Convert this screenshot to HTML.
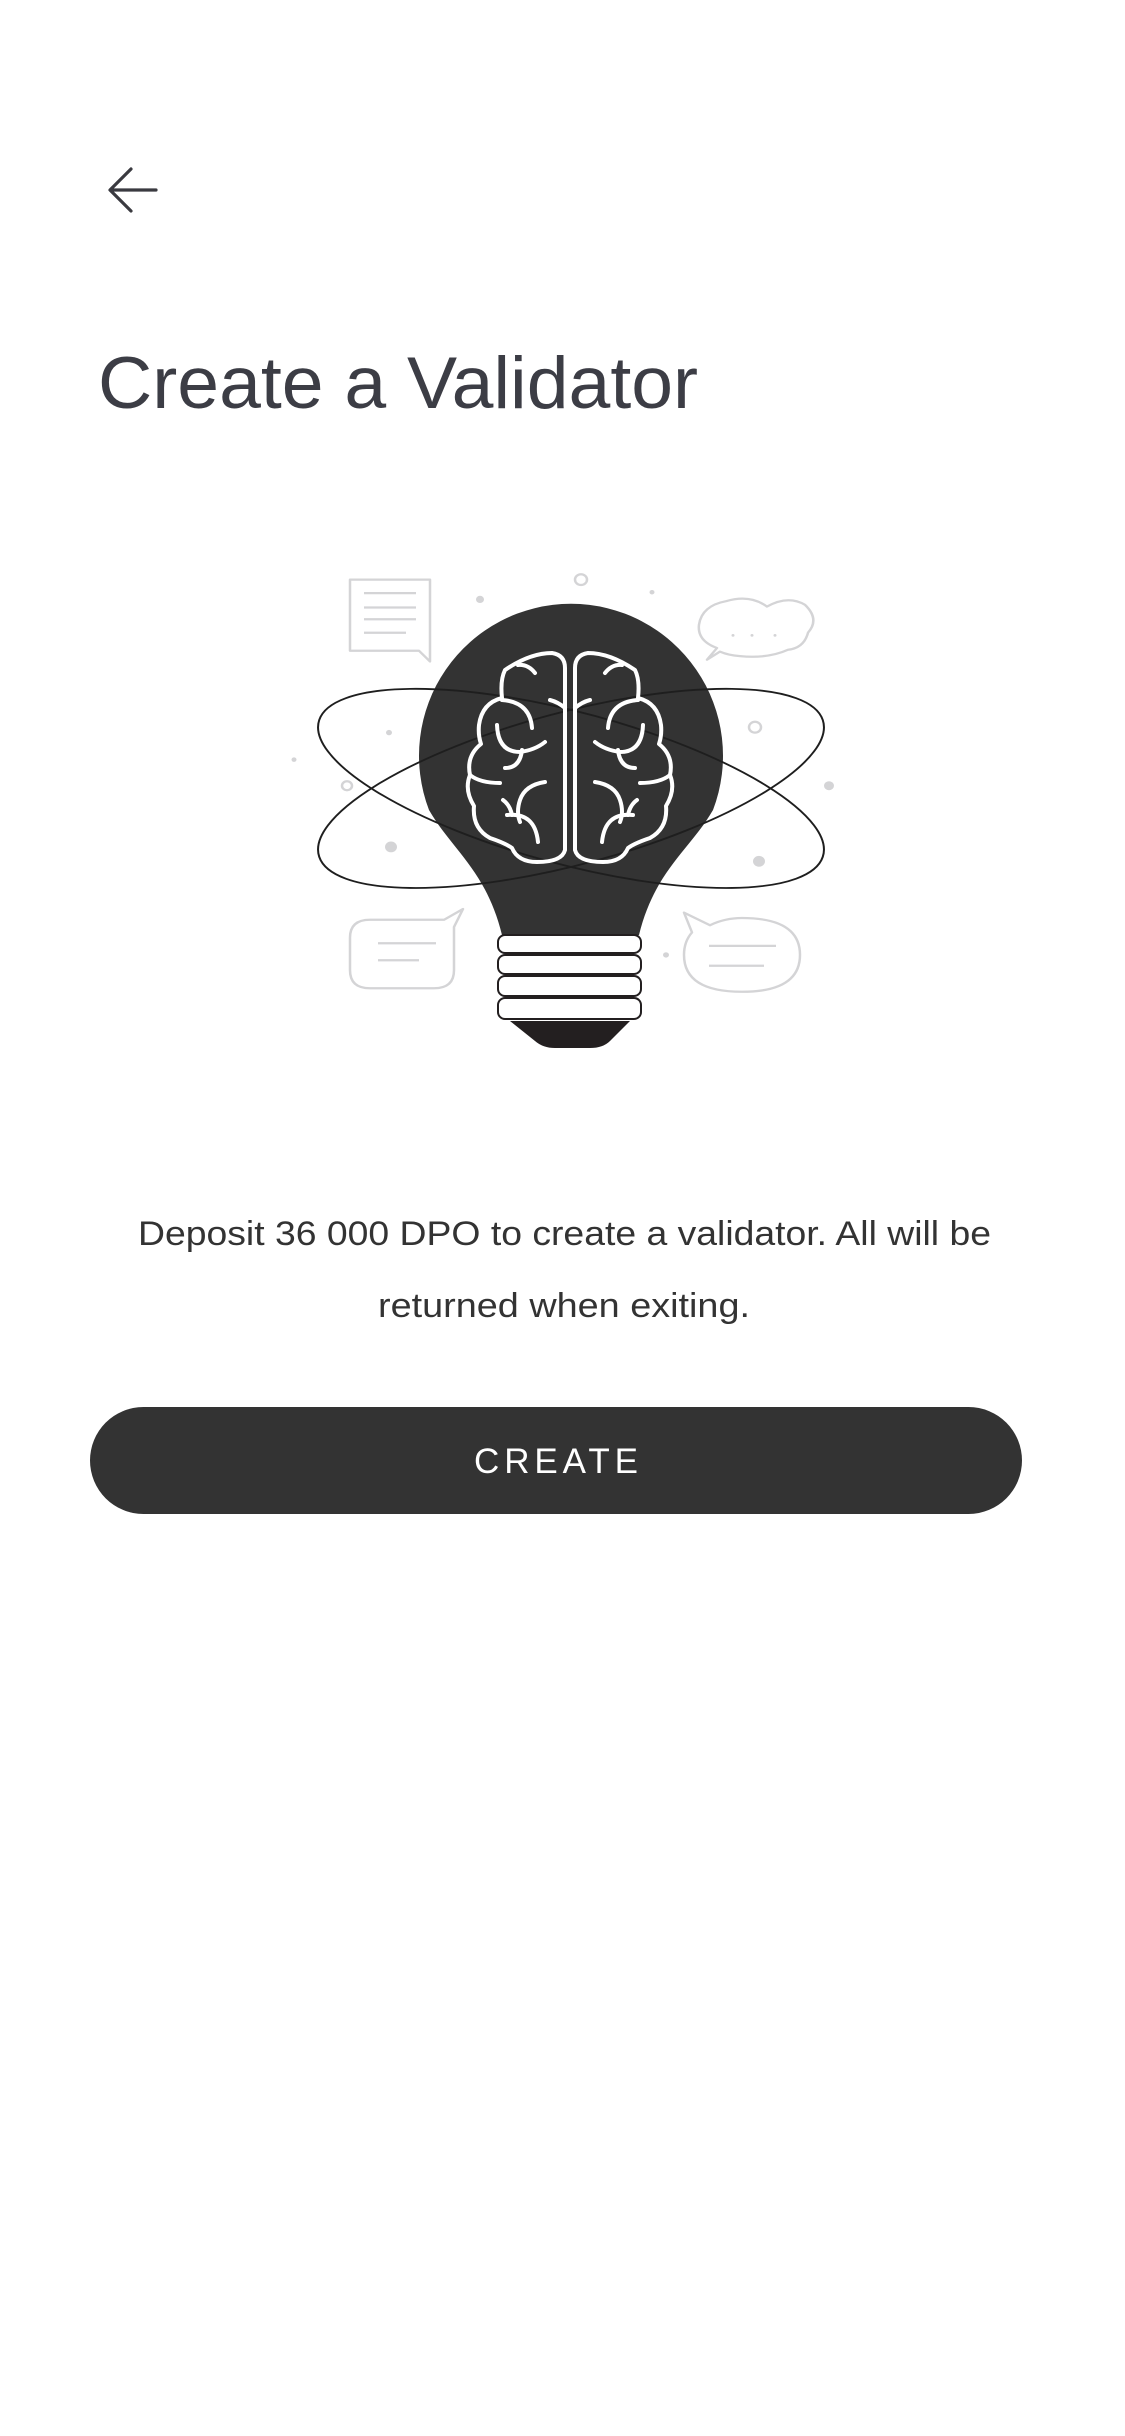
<!DOCTYPE html>
<html><head><meta charset="utf-8"><style>
html,body{margin:0;padding:0;background:#fff;}
svg{display:block}
</style></head><body>
<svg width="1125" height="2436" viewBox="0 0 1125 2436" xmlns="http://www.w3.org/2000/svg">
<rect width="1125" height="2436" fill="#fff"/>
<g stroke="#3a3a40" stroke-width="3.2" fill="none" stroke-linecap="round" stroke-linejoin="round">
<path d="M156,190 L111,190 M131,169 L110,190 L131,211"/>
</g>
<text x="98" y="408" font-family="Liberation Sans, sans-serif" font-size="73" fill="#3c3d45" textLength="600" lengthAdjust="spacingAndGlyphs">Create a Validator</text>

<g transform="translate(0,540) scale(1,0.9) translate(0,-540)">
<g stroke="#d4d4d6" stroke-width="2.5" fill="none" stroke-linejoin="round">
<path d="M350,584 L430,584 L430,663 L430,675 L419,663 L350,663 Z"/>
<path d="M364,599 H416 M364,615 H416 M364,628 H416 M364,643 H406"/>
<path d="M717,660 Q697,652 699,634 Q702,613 726,608 Q750,600 767,614 Q788,601 805,612 Q820,628 808,643 Q804,660 788,662 Q768,672 740,669 Q728,668 720,664 L707,673 Z"/>
<path d="M370,962 L444,962 L463,950 L454,970 L454,1018 Q454,1038 434,1038 L370,1038 Q350,1038 350,1018 L350,982 Q350,962 370,962 Z"/>
<path d="M378,988 H436 M378,1007 H419"/>
<path d="M684,954 L710,968 Q725,960 742,960 Q800,960 800,1001 Q800,1042 742,1042 Q684,1042 684,1001 Q684,986 692,976 Z"/>
<path d="M709,991 H776 M709,1013 H764"/>
<circle cx="581" cy="584" r="6"/>
<circle cx="347" cy="813" r="5"/>
<circle cx="755" cy="748" r="6"/>
</g>
<g fill="#d4d4d6">
<circle cx="480" cy="606" r="4"/><circle cx="652" cy="598" r="2.5"/><circle cx="389" cy="754" r="3"/>
<circle cx="294" cy="784" r="2.5"/><circle cx="391" cy="881" r="6"/><circle cx="829" cy="813" r="5"/>
<circle cx="759" cy="897" r="6"/><circle cx="666" cy="1001" r="3"/>
<circle cx="733" cy="646" r="1.5"/><circle cx="752" cy="646" r="1.5"/><circle cx="775" cy="646" r="1.5"/>
</g>
</g>

<path d="M429,810 A152 152 0 1 1 713,810 C690,850 655,870 639,935 L502,935 C486,870 452,850 429,810 Z" fill="#333333"/>
<g fill="#fff" stroke="#231f20" stroke-width="2">
<rect x="498" y="935" width="143" height="18" rx="7"/>
<rect x="498" y="955" width="143" height="19" rx="7"/>
<rect x="498" y="976" width="143" height="20" rx="7"/>
<rect x="498" y="998" width="143" height="21" rx="7"/>
</g>
<path d="M510,1021 L630,1021 L610,1041 Q603,1048 590,1048 L555,1048 Q543,1048 535,1041 Z" fill="#231f20"/>

<g transform="translate(0,540) scale(1,0.9) translate(0,-540)" fill="none" stroke="#1e1e1e" stroke-width="2">
<ellipse cx="571" cy="816" rx="263" ry="84" transform="rotate(16.8 571 816)"/>
<ellipse cx="571" cy="816" rx="263" ry="84" transform="rotate(-16.8 571 816)"/>
</g>

<g id="lb" fill="none" stroke="#fff" stroke-width="4" stroke-linecap="round" stroke-linejoin="round">
<path d="M565,850 L565,668 Q565,655 552,653 Q530,653 505,670 Q500,680 502,698 Q482,703 479,725 Q478,735 481,744 Q466,756 470,775 Q464,790 474,806 Q472,828 490,838 Q505,843 512,848 Q518,862 537,862 Q562,862 565,850 Z"/>
<path d="M535,673 Q528,664 518,665"/>
<path d="M502,700 Q530,702 532,728"/>
<path d="M497,725 Q498,752 520,752 Q535,750 545,742"/>
<path d="M505,768 Q520,768 522,750"/>
<path d="M470,775 Q480,783 500,783"/>
<path d="M545,782 Q525,785 520,800 Q516,812 520,822"/>
<path d="M503,800 Q510,805 512,815"/>
<path d="M507,815 Q535,812 538,842"/>
<path d="M550,700 Q558,702 565,708"/>
</g>
<use href="#lb" transform="translate(1140,0) scale(-1,1)"/>

<g font-family="Liberation Sans, sans-serif" fill="#333" font-size="34">
<text x="138" y="1245" textLength="853" lengthAdjust="spacingAndGlyphs">Deposit 36 000 DPO to create a validator. All will be</text>
<text x="378" y="1317" textLength="372" lengthAdjust="spacingAndGlyphs">returned when exiting.</text>
</g>
<rect x="90" y="1407" width="932" height="107" rx="53.5" fill="#333333"/>
<text x="474" y="1473" font-family="Liberation Sans, sans-serif" font-size="35" fill="#fff" textLength="164" lengthAdjust="spacing">CREATE</text>
</svg>
</body></html>
